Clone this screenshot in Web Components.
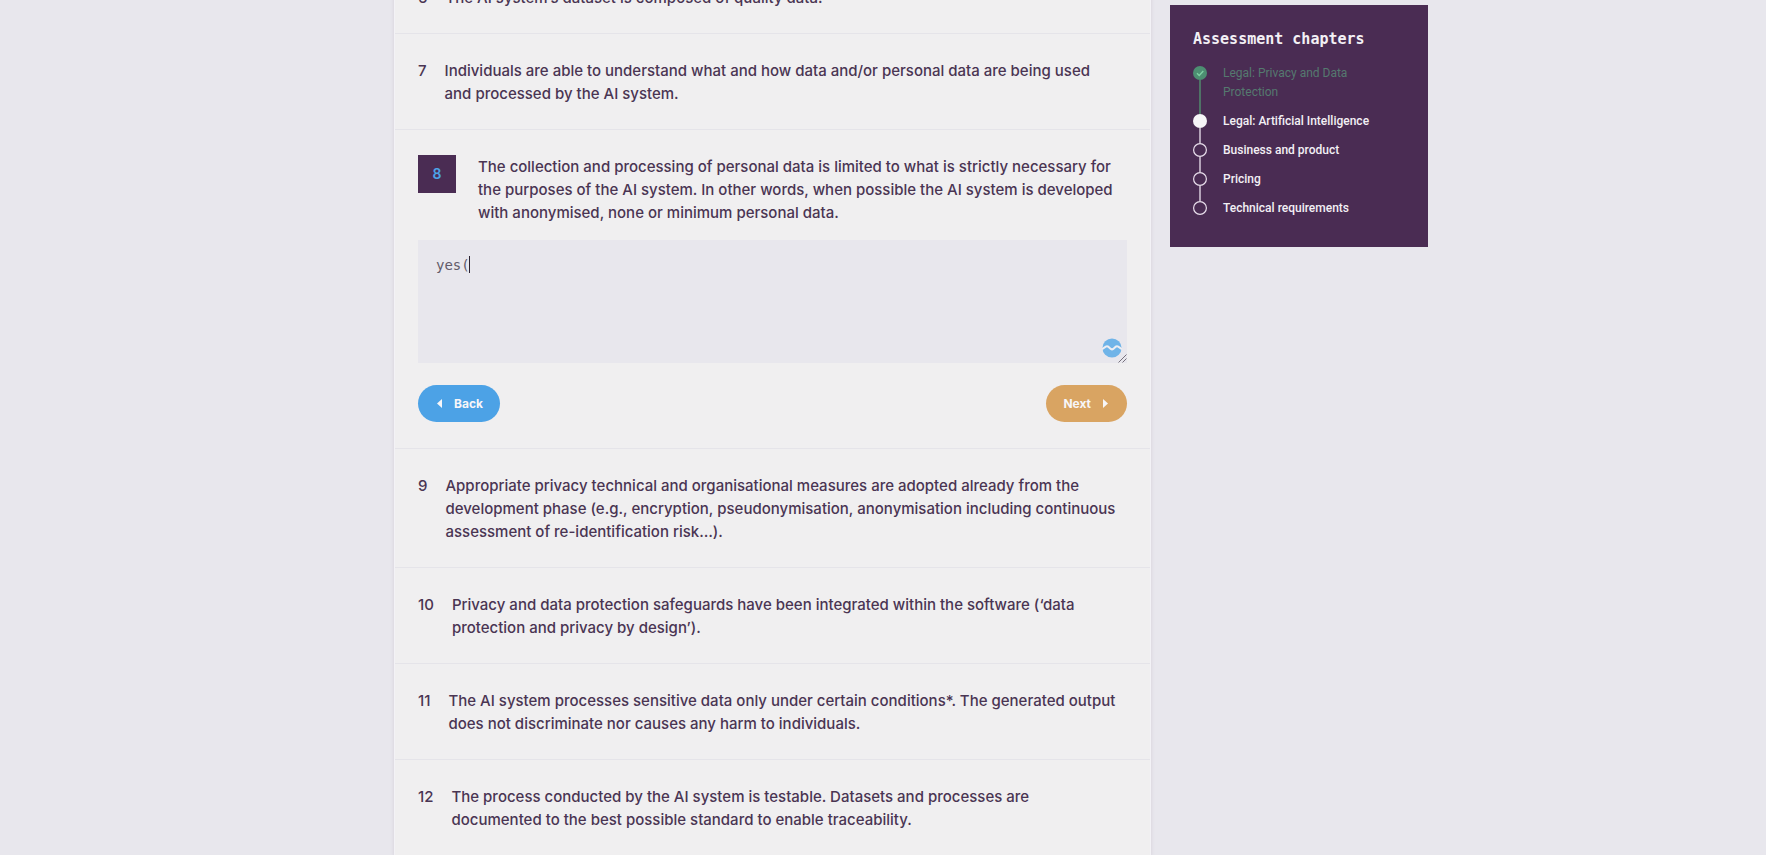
<!DOCTYPE html>
<html lang="en">
<head>
<meta charset="utf-8">
<title>Assessment</title>
<style>
html { background: #e8e7ed; }
body { margin: 0; overflow: hidden; font-family: Inter, "Open Sans", sans-serif; color: #4a3553; }
</style>
</head>
<body>
<assessment-page>
  <question-list>
    <question-item number="6">The AI system’s dataset is composed of quality data.</question-item>
    <question-item number="7">Individuals are able to understand what and how data and/or personal data are being used<br>and processed by the AI system.</question-item>
    <question-item number="8" active>The collection and processing of personal data is limited to what is strictly necessary for<br>the purposes of the AI system. In other words, when possible the AI system is developed<br>with anonymised, none or minimum personal data.
      <answer-form slot="answer" value="yes("></answer-form>
    </question-item>
    <question-item number="9">Appropriate privacy technical and organisational measures are adopted already from the<br>development phase (e.g., encryption, pseudonymisation, anonymisation including continuous<br>assessment of re-identification risk…).</question-item>
    <question-item number="10">Privacy and data protection safeguards have been integrated within the software (‘data<br>protection and privacy by design’).</question-item>
    <question-item number="11">The AI system processes sensitive data only under certain conditions*. The generated output<br>does not discriminate nor causes any harm to individuals.</question-item>
    <question-item number="12">The process conducted by the AI system is testable. Datasets and processes are<br>documented to the best possible standard to enable traceability.</question-item>
  </question-list>
  <chapter-panel slot="aside" heading="Assessment chapters">
    <chapter-step state="done">Legal: Privacy and Data<br>Protection</chapter-step>
    <chapter-step state="current">Legal: Artificial Intelligence</chapter-step>
    <chapter-step>Business and product</chapter-step>
    <chapter-step>Pricing</chapter-step>
    <chapter-step>Technical requirements</chapter-step>
  </chapter-panel>
</assessment-page>

<script>
const define = (name, render) => customElements.define(name, class extends HTMLElement {
  connectedCallback() {
    if (this.shadowRoot) return;
    this.attachShadow({ mode: 'open' }).innerHTML = render(this);
  }
});

define('assessment-page', () => `
<style>
:host { display: block; }
.grid { display: grid; grid-template-columns: 394fr 757fr 19fr 258fr 338fr; margin-top: -39px; }
main { grid-column: 2; min-width: 0; }
aside { grid-column: 4; min-width: 0; align-self: start; position: sticky; top: 5px; }
</style>
<div class="grid"><main><slot></slot></main><aside><slot name="aside"></slot></aside></div>`);

define('question-list', () => `
<style>
:host { display: block; background: #f0eff0; border: solid #f3f2f6; border-width: 0 1px; box-shadow: 0 0 4px rgba(74, 45, 83, .13); }
</style>
<slot></slot>`);

define('question-item', el => `
<style>
:host { display: block; padding: 25px 23px 24px; border-bottom: 1px solid #e5e4e9; font-size: 15px; font-weight: 500; line-height: 23px; }
:host([active]) { padding-bottom: 26px; }
.row { display: flex; align-items: flex-start; gap: 18px; }
.text { white-space: nowrap; }
:host([active]) .row { gap: 22px; }
:host([active]) .number { width: 38px; line-height: 38px; text-align: center; background: #4a2c53; color: #4da3e8; font-weight: 600; font-size: 14px; }
</style>
<div class="row"><span class="number">${el.getAttribute('number')}</span><div class="text"><slot></slot></div></div>
<slot name="answer"></slot>`);

define('answer-form', el => `
<style>
:host { display: block; margin-top: 16px; }
.field { position: relative; height: 123px; }
textarea { display: block; box-sizing: border-box; width: 100%; height: 100%; margin: 0; padding: 15px 18px; border: 0; border-radius: 0; outline: 0; resize: none; background: #e8e7ed; color: #625b69; font: 14px/20px "DejaVu Sans Mono", monospace; }
.caret { position: absolute; left: calc(17px + 4ch); top: 16px; width: 1px; height: 17px; background: #2b2230; font: 14px "DejaVu Sans Mono", monospace; }
.badge { position: absolute; right: 5px; bottom: 5px; width: 20px; height: 20px; }
.grip { position: absolute; right: 0; bottom: 0; width: 9px; height: 9px; }
.actions { display: flex; justify-content: space-between; margin-top: 22px; }
button { display: flex; align-items: center; height: 37px; border: 0; border-radius: 19px; color: #f7f6f8; font: 700 12px/20px Inter, sans-serif; }
.back { gap: 12px; padding: 0 17px 0 19px; background: #4ca2e6; }
.next { gap: 12px; padding: 0 19px 0 17px; background: #d9a462; }
svg { display: block; }
</style>
<div class="field">
  <textarea aria-label="Answer">${el.getAttribute('value')}</textarea>
  <span class="caret"></span>
  <svg class="badge" viewBox="0 0 20 20" aria-hidden="true"><circle cx="10" cy="10" r="9.6" fill="#70b4e8"/><path d="M0 11.200L3.800 8.600Q5.200 7.800 6.600 8.900L8.800 10.900Q10 11.800 11.200 10.900L13.400 8.900Q14.800 7.800 16.200 8.600L20 11.200" fill="none" stroke="#eeeef3" stroke-width="2"/></svg>
  <svg class="grip" viewBox="0 0 9 9" aria-hidden="true"><path d="M.5 8.500L8.500.5M4.500 8.500L8.500 4.500" stroke="#77717c" fill="none"/></svg>
</div>
<div class="actions">
  <button class="back" type="button"><svg width="5" height="9" viewBox="0 0 5 9" aria-hidden="true"><path d="M5 0v9L0 4.500z" fill="#f7f6f8"/></svg>Back</button>
  <button class="next" type="button">Next<svg width="5" height="9" viewBox="0 0 5 9" aria-hidden="true"><path d="M0 0v9l5-4.500z" fill="#f7f6f8"/></svg></button>
</div>`);

define('chapter-panel', el => `
<style>
:host { display: block; padding: 24px 23px 29px; background: #4a2c53; color: #f3f0f5; }
h2 { margin: 0 0 15px; font: 700 15px/20px "DejaVu Sans Mono", monospace; white-space: nowrap; }
nav { display: grid; gap: 10px; }
</style>
<h2>${el.getAttribute('heading')}</h2><nav aria-label="Assessment chapters"><slot></slot></nav>`);

const dots = {
  done: '<circle cx="7" cy="7" r="7" fill="#4d8f72"/><path d="M4 7.200l2.200 2.200L10.300 5" fill="none" stroke="#7fd0a4" stroke-width="1.400"/>',
  current: '<circle cx="7" cy="7" r="7" fill="#f7f5f8"/>',
  todo: '<circle cx="7" cy="7" r="6.400" fill="#4a2c53" stroke="#e9dfec" stroke-width="1.200"/>'
};
define('chapter-step', el => `
<style>
:host { display: flex; gap: 16px; position: relative; font: 500 12px/19px Roboto, sans-serif; white-space: nowrap; --line: #b3a3b8; }
:host([state="done"]) { color: #55796f; font-weight: 400; --line: #4f7266; }
svg { flex: none; margin-top: 2px; }
:host(:not(:last-of-type))::before { content: ""; position: absolute; left: 6px; top: 16px; bottom: -12px; width: 2px; background: var(--line); }
</style>
<svg width="14" height="14" viewBox="0 0 14 14" aria-hidden="true">${dots[el.getAttribute('state') || 'todo']}</svg><span><slot></slot></span>`);
</script>
</body>
</html>
